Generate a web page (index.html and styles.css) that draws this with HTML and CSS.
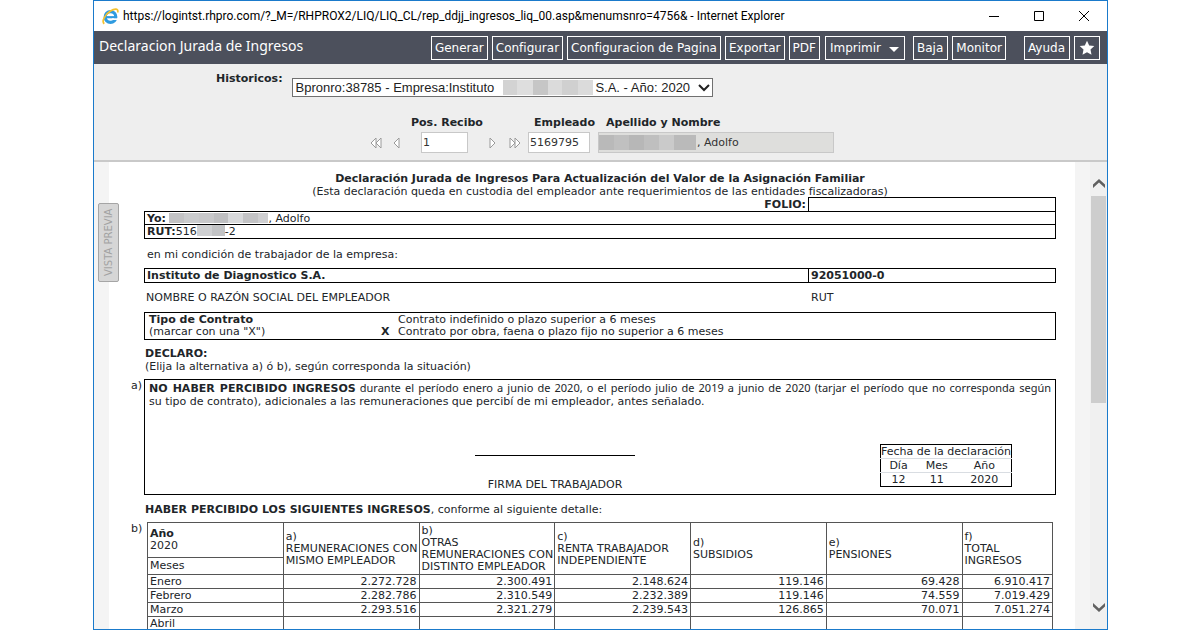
FILE: index.html
```
<!DOCTYPE html>
<html lang="es">
<head>
<meta charset="utf-8">
<title>Declaracion Jurada de Ingresos</title>
<link rel="stylesheet" href="styles.css">
</head>
<body>
<div class="window">
  <header class="titlebar">
    <svg class="ie" viewBox="0 0 17 17" aria-hidden="true">
      <circle cx="8.500" cy="9" r="5.300" fill="none" stroke="#2f9be0" stroke-width="3.200"/>
      <path d="M4 9.200h11" stroke="#2f9be0" stroke-width="2.200"/>
      <path d="M10 10.300h6v1.700h-6z" fill="#fff"/>
      <path d="M2.300 15.800C-.8 13.500 3 6.500 8.500 3 12.500.4 17 .2 15.600 4.600" fill="none" stroke="#f3c12f" stroke-width="1.700"/>
    </svg>
    <span class="address">https://logintst.rhpro.com/?_M=/RHPROX2/LIQ/LIQ_CL/rep_ddjj_ingresos_liq_00.asp&amp;menumsnro=4756&amp; - Internet Explorer</span>
    <div class="controls">
      <button aria-label="Minimizar"><svg viewBox="0 0 12 12"><path d="M1 6.500h10" /></svg></button>
      <button aria-label="Maximizar"><svg viewBox="0 0 12 12"><path d="M1.500 1.500h9v9h-9z" /></svg></button>
      <button aria-label="Cerrar"><svg viewBox="0 0 12 12"><path d="M1 1l10 10M11 1L1 11" /></svg></button>
    </div>
  </header>

  <nav class="toolbar">
    <h1>Declaracion Jurada de Ingresos</h1>
    <div class="actions">
      <button>Generar</button>
      <button>Configurar</button>
      <button>Configuracion de Pagina</button>
      <button>Exportar</button>
      <button>PDF</button>
      <button class="print">Imprimir <svg class="caret" viewBox="0 0 10 5"><path d="M0 0h10L5 5z" fill="#fff"/></svg></button>
      <button class="low">Baja</button>
      <button>Monitor</button>
      <button class="help">Ayuda</button>
      <button class="fav" aria-label="Favorito"><svg viewBox="0 0 16 16"><path d="M8 .8l2.200 4.700 5.100.6-3.800 3.500 1 5.100L8 12.200l-4.500 2.500 1-5.100L.7 6.100l5.100-.6z" fill="#fff"/></svg></button>
    </div>
  </nav>

  <form class="filters">
    <div class="history">
      <label for="hist">Historicos:</label>
      <div class="picker">
        <select id="hist"><option>Bpronro:38785 - Empresa:Instituto&nbsp;&nbsp;&nbsp;&nbsp;&nbsp;&nbsp;&nbsp;&nbsp;&nbsp;&nbsp;&nbsp;&nbsp;&nbsp;&nbsp;&nbsp;&nbsp;&nbsp;&nbsp;&nbsp;&nbsp;&nbsp;&nbsp;&nbsp;&nbsp;&nbsp;&nbsp;&nbsp;&nbsp;S.A. - Año: 2020</option></select>
        <span class="redact picker-redact"></span>
        <svg class="picker-arrow" viewBox="0 0 12 8"><path d="M1 1l5 5 5-5" fill="none" stroke="#222" stroke-width="2"/></svg>
      </div>
    </div>
    <div class="employee">
      <div class="field pos">
        <label for="pos">Pos. Recibo</label>
        <div class="pager">
          <button type="button" aria-label="Primero"><svg viewBox="0 0 12 12"><path d="M6 1v10L1 6zM11 1v10L6 6z"/></svg></button>
          <button type="button" class="prev" aria-label="Anterior"><svg viewBox="0 0 12 12"><path d="M8 1v10L3 6z"/></svg></button>
          <input id="pos" class="page-no" value="1">
          <button type="button" class="next" aria-label="Siguiente"><svg viewBox="0 0 12 12"><path d="M4 1v10l5-5z"/></svg></button>
          <button type="button" class="last" aria-label="Último"><svg viewBox="0 0 12 12"><path d="M1 1v10l5-5zM6 1v10l5-5z"/></svg></button>
        </div>
      </div>
      <div class="field emp">
        <label for="emp">Empleado</label>
        <input id="emp" value="5169795">
      </div>
      <div class="field name">
        <label for="name">Apellido y Nombre</label>
        <div class="name-box">
          <input id="name" value=", Adolfo" readonly>
          <span class="redact name-redact"></span>
        </div>
      </div>
    </div>
  </form>

  <main class="viewer">
    <aside class="rail"><button class="preview">VISTA PREVIA</button></aside>
    <article class="doc">
      <header class="doc-head">
        <h2>Declaración Jurada de Ingresos Para Actualización del Valor de la Asignación Familiar</h2>
        <p>(Esta declaración queda en custodia del empleador ante requerimientos de las entidades fiscalizadoras)</p>
      </header>
      <div class="split folio"><b>FOLIO:</b><span class="folio-box"></span></div>
      <div class="box person">
        <p><b>Yo:</b> <span class="redact yo-redact"></span>, Adolfo</p>
        <p><b>RUT:</b>516<span class="redact rut-redact"></span>-2</p>
      </div>
      <p class="condition">en mi condición de trabajador de la empresa:</p>
      <div class="box split company"><b>Instituto de Diagnostico S.A.</b><b class="company-rut">92051000-0</b></div>
      <div class="split captions"><span>NOMBRE O RAZÓN SOCIAL DEL EMPLEADOR</span><span>RUT</span></div>
      <div class="box contract">
        <div><b>Tipo de Contrato</b><br>(marcar con una "X")</div>
        <b class="mark">X</b>
        <div>Contrato indefinido o plazo superior a 6 meses<br>Contrato por obra, faena o plazo fijo no superior a 6 meses</div>
      </div>
      <div class="declare"><b>DECLARO:</b><br>(Elija la alternativa a) ó b), según corresponda la situación)</div>

      <section class="item">
        <span class="letter">a)</span>
        <div class="box statement">
          <p class="first-line"><b>NO HABER PERCIBIDO INGRESOS</b> durante el período enero a junio de 2020, o el período julio de 2019 a junio de 2020 (tarjar el período que no corresponda según</p>
          <p>su tipo de contrato), adicionales a las remuneraciones que percibí de mi empleador, antes señalado.</p>
          <div class="sign-row">
            <div class="signature">FIRMA DEL TRABAJADOR</div>
            <table class="date">
              <thead>
                <tr><th colspan="3">Fecha de la declaración</th></tr>
                <tr><th>Día</th><th>Mes</th><th>Año</th></tr>
              </thead>
              <tbody><tr><td>12</td><td>11</td><td>2020</td></tr></tbody>
            </table>
          </div>
        </div>
      </section>

      <p class="detail"><b>HABER PERCIBIDO LOS SIGUIENTES INGRESOS</b>, conforme al siguiente detalle:</p>

      <section class="item">
        <span class="letter">b)</span>
        <table class="income">
          <colgroup><col class="c"><col class="c"><col class="c"><col class="c"><col class="c"><col class="c"><col></colgroup>
          <thead>
            <tr class="h1">
              <th><b>Año</b><br>2020</th>
              <th rowspan="2">a)<br>REMUNERACIONES CON<br>MISMO EMPLEADOR</th>
              <th rowspan="2">b)<br>OTRAS<br>REMUNERACIONES CON<br>DISTINTO EMPLEADOR</th>
              <th rowspan="2">c)<br>RENTA TRABAJADOR<br>INDEPENDIENTE</th>
              <th rowspan="2">d)<br>SUBSIDIOS</th>
              <th rowspan="2">e)<br>PENSIONES</th>
              <th rowspan="2">f)<br>TOTAL<br>INGRESOS</th>
            </tr>
            <tr class="h2"><th>Meses</th></tr>
          </thead>
          <tbody>
            <tr><th>Enero</th><td>2.272.728</td><td>2.300.491</td><td>2.148.624</td><td>119.146</td><td>69.428</td><td>6.910.417</td></tr>
            <tr><th>Febrero</th><td>2.282.786</td><td>2.310.549</td><td>2.232.389</td><td>119.146</td><td>74.559</td><td>7.019.429</td></tr>
            <tr><th>Marzo</th><td>2.293.516</td><td>2.321.279</td><td>2.239.543</td><td>126.865</td><td>70.071</td><td>7.051.274</td></tr>
            <tr><th>Abril</th><td></td><td></td><td></td><td></td><td></td><td></td></tr>
          </tbody>
        </table>
      </section>
    </article>
    <div class="gutter"></div>
    <div class="scrollbar">
      <svg viewBox="0 0 12 9"><path d="M0 9V5.500L6 0l6 5.500V9L6 3.500z"/></svg>
      <div class="track"><div class="thumb"></div></div>
      <svg viewBox="0 0 12 9"><path d="M0 0v3.500L6 9l6-5.500V0L6 5.500z"/></svg>
    </div>
  </main>
</div>
</body>
</html>
```
FILE: styles.css
```
* { box-sizing: border-box; }

body {
  margin: 0;
  padding: 0 92px 0 93px;
  background: #fff;
  color: #212529;
  font: 11px/13px "DejaVu Sans", Verdana, sans-serif;
}

h1, h2, p { margin: 0; }
button { padding: 0; font: inherit; }
svg { display: block; }

.window {
  display: flex;
  flex-direction: column;
  height: 100vh;
  overflow: hidden;
  border: 1px solid #1a7acb;
}

/* Window title bar */
.titlebar {
  display: flex;
  align-items: center;
  flex: none;
  height: 30px;
  padding-left: 8px;
  color: #000;
  font: 12px/16px Roboto, sans-serif;
}
.ie { width: 17px; height: 17px; margin-right: 4px; }
.address { flex: 1; white-space: nowrap; }
.controls { display: flex; padding-right: 1px; }
.controls button {
  display: flex;
  align-items: center;
  justify-content: center;
  width: 45px;
  height: 28px;
  border: 0;
  background: none;
}
.controls svg { width: 12px; height: 12px; fill: none; stroke: #000; stroke-width: 1; }

/* Toolbar */
.toolbar {
  display: flex;
  flex: none;
  justify-content: space-between;
  height: 33px;
  padding: 5px 7px 4px 5px;
  background: #4c505c;
  color: #fff;
}
.toolbar h1 { font: 14px/20px "Noto Sans", sans-serif; white-space: nowrap; }
.actions { display: flex; gap: 4px; }
.actions button {
  display: flex;
  align-items: center;
  height: 24px;
  padding: 0 3px;
  border: 1px solid #fff;
  background: none;
  color: #fff;
  font-size: 12px;
  white-space: nowrap;
}
.actions .print { margin-left: 1px; padding: 0 5px 0 4px; }
.caret { width: 10px; height: 5px; margin: 3px 0 0 8px; }
.actions .low { margin-left: 4px; padding-right: 4px; }
.actions .help { margin-left: 14px; padding-right: 4px; }
.actions .fav { padding: 0 4px; }
.fav svg { width: 16px; height: 16px; }

/* Search form */
.filters {
  flex: none;
  height: 98px;
  padding: 8px 0 0 122px;
  border-bottom: 2px solid #c9c9c9;
  background: #eee;
}
.filters label { font-weight: bold; white-space: nowrap; }
.history { display: flex; gap: 9px; }
.picker { position: relative; flex: none; width: 421px; padding-top: 6px; }
.picker select {
  display: block;
  appearance: none;
  width: 100%;
  height: 19px;
  padding: 0 3px;
  border: 1px solid #707070;
  border-radius: 0;
  background: #fff;
  color: #222;
  font: 13px/17px "Liberation Sans", Arial, sans-serif;
}
.picker-arrow { position: absolute; right: 3px; bottom: 5px; width: 12px; height: 8px; pointer-events: none; }

.employee { display: flex; padding: 19px 0 0 154px; }
.field { display: flex; flex-direction: column; gap: 3px; }
.filters input {
  min-width: 0;
  height: 21px;
  padding: 0 0 0 1px;
  border: 1px solid #c8c8c8;
  background: #fff;
  color: #333;
  font: inherit;
}
.pos { width: 158px; }
.pos label { padding-left: 41px; }
.pager { display: flex; align-items: center; }
.pager button { border: 0; background: none; }
.pager svg { width: 12px; height: 12px; fill: #fff; stroke: #9a9a9a; stroke-width: 1; }
.pager .prev { margin-left: 9px; }
.pager .page-no { width: 47px; margin-left: 18px; }
.pager .next { margin-left: 18px; }
.pager .last { margin-left: 11px; }
.emp { width: 62px; }
.emp label { align-self: center; padding-left: 11px; }
.name { width: 236px; margin-left: 8px; }
.name label { padding-left: 8px; }
.name-box { position: relative; display: flex; }
.name-box input { flex: 1; padding-left: 98px; background: #dededc; }

/* Masked personal data */
.redact { display: inline-block; background: #c6c7c9; }
.picker-redact {
  position: absolute;
  left: 211px;
  bottom: 2px;
  width: 90px;
  height: 15px;
  background: linear-gradient(90deg, #d3d3d3 0 16%, #dedede 16% 33%, #c6c6c6 33% 50%, #dbdbdb 50% 66%, #d0d0d0 66% 83%, #dbdbdb 83%);
}
.name-redact {
  position: absolute;
  left: 1px;
  bottom: 3px;
  width: 97px;
  height: 15px;
  background: linear-gradient(90deg, #b9b9b9 0 15%, #c0c0c0 15% 31%, #b7b7b7 31% 46%, #bfbfbf 46% 62%, #cacaca 62% 77%, #bababa 77%);
}
.yo-redact {
  width: 99px;
  height: 10px;
  vertical-align: -1px;
  background: linear-gradient(90deg, #c3c3c5 0 15%, #cbccce 15% 30%, #c8c8ca 30% 45%, #bfbfc1 45% 60%, #d8d9db 60% 75%, #c3c3c5 75% 90%, #cfcfd1 90%);
}
.rut-redact { width: 28px; height: 11px; vertical-align: -1px; background: linear-gradient(90deg, #cfd0d2 0 55%, #c2c3c5 55%); }

/* Document viewer */
.viewer { display: flex; flex: 1; min-height: 0; }
.rail { position: relative; flex: none; width: 15px; background: #f4f4f4; }
.preview {
  position: absolute;
  top: 41px;
  left: 4px;
  width: 21px;
  height: 79px;
  border: 1px solid #a5a5a5;
  border-radius: 2px;
  background: #d6d6d6;
  color: #a2a2a2;
  font-size: 10px;
  white-space: nowrap;
  writing-mode: vertical-rl;
  text-orientation: sideways;
  rotate: 180deg;
}
.doc { flex: 1; min-width: 0; padding: 10px 19px 0 35px; }
.gutter { flex: none; width: 15px; background: #f4f4f4; }
.scrollbar {
  display: flex;
  flex: none;
  flex-direction: column;
  align-items: center;
  gap: 8px;
  width: 17px;
  padding: 17px 0;
  background: #f0f0f0;
}
.scrollbar svg { width: 12px; height: 9px; fill: #606060; }
.track { flex: 1; align-self: stretch; padding: 0 1px; }
.thumb { height: 52%; background: #cdcdcd; }

/* Declaration */
.doc b { font-weight: bold; }
.doc-head { text-align: center; white-space: nowrap; }
.doc-head h2 { font-size: 11px; line-height: 13px; }
.box { border: 1px solid #000; }
.split { display: grid; grid-template-columns: 665px 1fr; }
.folio { grid-template-columns: 664px 1fr; height: 14px; margin-top: -1px; text-align: right; }
.folio b { padding: 1px 2px 0 0; }
.folio-box { border: 1px solid #000; border-bottom: 0; }
.person p { height: 12px; padding-left: 2px; }
.person p + p { height: 14px; border-top: 1px solid #000; }
.condition { padding: 9px 3px 0; }
.company { height: 15px; margin-top: 7px; grid-template-columns: 663px 1fr; }
.company b { padding-left: 2px; }
.company .company-rut { border-left: 1px solid #000; }
.captions { padding: 8px 0 8px 2px; }
.contract {
  display: grid;
  grid-template-columns: 231px 18px 1fr;
  align-items: end;
  padding: 1px 4px;
  line-height: 12px;
}
.contract .mark { padding-left: 1px; }
.declare { padding: 7px 0 6px 1px; }
.item { display: flex; }
.letter { flex: none; width: 14px; margin-left: -14px; padding-left: 1px; }
.statement { flex: 1; min-width: 0; padding: 1px 4px 0; }
.statement .first-line { font-family: "Noto Sans", sans-serif; text-align-last: justify; }
.first-line b { font-family: "DejaVu Sans", Verdana, sans-serif; }
.sign-row { display: grid; grid-template-columns: 326px 160px 1fr; align-items: end; padding-top: 36px; }
.signature {
  grid-column: 2;
  height: 39px;
  padding-top: 22px;
  border-top: 1px solid #000;
  text-align: center;
  white-space: nowrap;
}
.date { justify-self: end; width: 131px; margin: 0 39px 7px 0; border: 1px solid #000; border-collapse: collapse; }
.date th, .date td { padding: 0; font-weight: normal; text-align: center; white-space: nowrap; }
.date tr + tr { border-top: 1px solid #d9dde2; }
.date tbody { border-top: 1px solid #d9dde2; }
.detail { padding: 8px 0 6px 1px; }
.income {
  flex: 1;
  width: 100%;
  margin: 0 3px;
  border-collapse: collapse;
  table-layout: fixed;
}
.income .c { width: 15%; }
.income th, .income td { height: 14px; padding: 0 2px; border: 1px solid #555; font-weight: normal; white-space: nowrap; }
.income th { text-align: left; }
.income td { text-align: right; }
.income thead th { line-height: 12px; }
.income .h1 th { height: 35px; }
.income .h2 th { height: 17px; }
```
